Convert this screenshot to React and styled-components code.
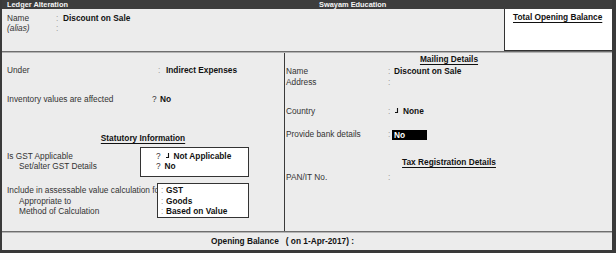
import React from 'react'
import styled, { createGlobalStyle } from 'styled-components'

const GlobalStyle = createGlobalStyle`
  html, body { margin: 0; padding: 0; background: #ececec; }
  body {
    font-family: "Liberation Sans", Arial, sans-serif;
    font-size: 8.3px;
    color: #2a2a2a;
  }
`

const Frame = styled.div`
  width: 616px;
  height: 253px;
  box-sizing: border-box;
  background: #ececec;
  border-left: 2px solid #3a3a3a;
  border-right: 4px solid #3a3a3a;
  border-bottom: 3px solid #3a3a3a;
  display: flex;
  flex-direction: column;
`

const TitleBar = styled.div`
  height: 9px;
  flex: none;
  background: #3d3d3d;
  color: #f4f4f4;
  font-weight: bold;
  font-size: 7.4px;
  line-height: 9px;
  display: grid;
  grid-template-columns: 312px 1fr;
  padding-left: 5px;
  white-space: nowrap;
`

const TopSection = styled.div`
  height: 42px;
  flex: none;
  display: flex;
`

const TopFields = styled.div`
  flex: 1;
  padding: 4px 0 0 5px;
`

const TotalBox = styled.div`
  width: 108px;
  background: #fff;
  border-left: 1px solid #333;
  border-bottom: 1px solid #333;
  padding: 2.5px 0 0 8px;
  box-sizing: border-box;
`

const Underlined = styled.div`
  font-weight: bold;
  color: #111;
  line-height: 11px;
  text-decoration: underline;
  text-underline-offset: 2px;
  text-align: ${p => p.$align || 'left'};
  margin-top: ${p => p.$mt || 0}px;
`

const Rule = styled.div`
  height: 2px;
  flex: none;
  background: #6e6e6e;
  border-bottom: 0.5px solid #b4b4b4;
  box-sizing: border-box;
`

const Main = styled.div`
  flex: 1;
  display: flex;
  min-height: 0;
`

const LeftCol = styled.div`
  width: 283px;
  flex: none;
  border-right: 1px solid #3a3a3a;
  padding-left: 5px;
  box-sizing: border-box;
`

const RightCol = styled.div`
  flex: 1;
  padding: 1px 0 0 1px;
`

const Field = styled.div`
  display: grid;
  grid-template-columns: ${p => p.$label}px ${p => p.$mark}px auto;
  line-height: ${p => p.$lh || 11}px;
  margin-top: ${p => p.$mt || 0}px;
  white-space: nowrap;
`

const Label = styled.span`
  padding-left: ${p => p.$indent || 0}px;
  font-style: ${p => (p.$italic ? 'italic' : 'normal')};
  color: #333;
`

const Colon = styled.span`
  color: #9a9a9a;
`

const Mark = styled.span`
  color: #333;
`

const Value = styled.span`
  font-weight: bold;
  color: #111;
  display: inline-flex;
  align-items: flex-start;
`

const Group = styled.div`
  display: grid;
  grid-template-columns: ${p => p.$labelW}px ${p => p.$boxW}px;
  margin-top: ${p => p.$mt || 0}px;
  line-height: ${p => p.$lh}px;
  white-space: nowrap;
`

const GroupLabels = styled.div`
  padding-top: ${p => p.$pt}px;
  display: flex;
  flex-direction: column;
`

const InputBox = styled.div`
  background: #fff;
  border: 1px solid #333;
  padding: ${p => p.$pt}px 0 ${p => p.$pb}px ${p => p.$pl}px;
`

const BoxLine = styled.div`
  display: grid;
  grid-template-columns: ${p => p.$mark}px auto;
`

const Hilite = styled.span`
  display: inline-block;
  width: 35px;
  height: 10px;
  line-height: 10px;
  margin-top: 0.5px;
  background: #000;
  color: #fff;
  font-weight: bold;
  padding-left: 2px;
  box-sizing: border-box;
`

const BottomBar = styled.div`
  height: 17px;
  flex: none;
  line-height: 17px;
  padding-left: 209px;
  font-weight: bold;
  color: #111;
  white-space: nowrap;
  display: flex;
  gap: 7px;
`

const JoinMark = () => (
  <svg width="5" height="6" viewBox="0 0 5 6" style={{ marginTop: 1.5, marginRight: 4 }}>
    <path d="M3.5 0 V4.5 H1" fill="none" stroke="#111" strokeWidth="1.1" />
  </svg>
)

export default function App() {
  return (
    <>
      <GlobalStyle />
      <Frame>
        <TitleBar>
          <span>Ledger Alteration</span>
          <span>Swayam Education</span>
        </TitleBar>

        <TopSection>
          <TopFields>
            <Field $label={49} $mark={7} $lh={10}>
              <Label>Name</Label>
              <Colon>:</Colon>
              <Value>Discount on Sale</Value>
            </Field>
            <Field $label={49} $mark={7} $lh={10}>
              <Label $italic>(alias)</Label>
              <Colon>:</Colon>
              <span />
            </Field>
          </TopFields>
          <TotalBox>
            <Underlined>Total Opening Balance</Underlined>
          </TotalBox>
        </TopSection>
        <Rule />

        <Main>
          <LeftCol>
            <Field $label={151} $mark={8} $mt={12}>
              <Label>Under</Label>
              <Colon>:</Colon>
              <Value>Indirect Expenses</Value>
            </Field>
            <Field $label={145} $mark={8} $mt={18}>
              <Label>Inventory values are affected</Label>
              <Mark>?</Mark>
              <Value>No</Value>
            </Field>

            <Underlined $align="center" $mt={28} style={{ marginLeft: -5 }}>
              Statutory Information
            </Underlined>

            <Group $labelW={133} $boxW={109} $mt={3} $lh={10}>
              <GroupLabels $pt={4}>
                <Label>Is GST Applicable</Label>
                <Label $indent={12}>Set/alter GST Details</Label>
              </GroupLabels>
              <InputBox $pt={3} $pb={5} $pl={15}>
                <BoxLine $mark={8.5}>
                  <Mark>?</Mark>
                  <Value><JoinMark />Not Applicable</Value>
                </BoxLine>
                <BoxLine $mark={8.5}>
                  <Mark>?</Mark>
                  <Value>No</Value>
                </BoxLine>
              </InputBox>
            </Group>

            <Group $labelW={150} $boxW={92} $mt={6} $lh={10.5}>
              <GroupLabels $pt={2}>
                <Label>Include in assessable value calculation for</Label>
                <Label $indent={12}>Appropriate to</Label>
                <Label $indent={12}>Method of Calculation</Label>
              </GroupLabels>
              <InputBox $pt={1} $pb={0} $pl={3}>
                <BoxLine $mark={5}>
                  <Colon>:</Colon>
                  <Value>GST</Value>
                </BoxLine>
                <BoxLine $mark={5}>
                  <Colon>:</Colon>
                  <Value>Goods</Value>
                </BoxLine>
                <BoxLine $mark={5}>
                  <Colon>:</Colon>
                  <Value>Based on Value</Value>
                </BoxLine>
              </InputBox>
            </Group>
          </LeftCol>

          <RightCol>
            <Underlined $align="center">Mailing Details</Underlined>
            <Field $label={102} $mark={6} $lh={10.5} $mt={1}>
              <Label>Name</Label>
              <Colon>:</Colon>
              <Value>Discount on Sale</Value>
            </Field>
            <Field $label={102} $mark={6} $lh={10.5}>
              <Label>Address</Label>
              <Colon>:</Colon>
              <span />
            </Field>
            <Field $label={102} $mark={6} $mt={19}>
              <Label>Country</Label>
              <Colon>:</Colon>
              <Value><JoinMark />None</Value>
            </Field>
            <Field $label={102} $mark={4} $mt={12}>
              <Label>Provide bank details</Label>
              <Colon>:</Colon>
              <span><Hilite>No</Hilite></span>
            </Field>
            <Underlined $align="center" $mt={16}>Tax Registration Details</Underlined>
            <Field $label={102} $mark={6} $mt={4}>
              <Label>PAN/IT No.</Label>
              <Colon>:</Colon>
              <span />
            </Field>
          </RightCol>
        </Main>

        <Rule />
        <BottomBar>
          <span>Opening Balance</span>
          <span>( on 1-Apr-2017) :</span>
        </BottomBar>
      </Frame>
    </>
  )
}
